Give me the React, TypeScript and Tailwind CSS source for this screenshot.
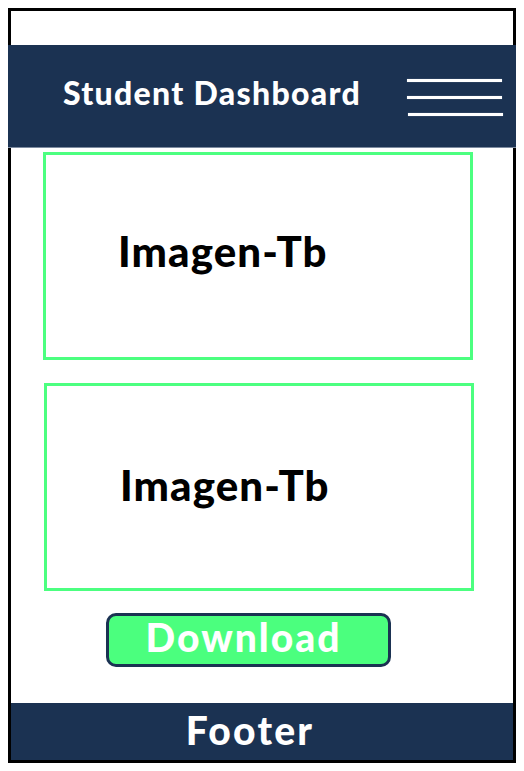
export default function App() {
  const font = { fontFamily: "Lato, 'Open Sans', sans-serif" };
  return (
    <div className="w-[524px] h-[771px] bg-white" style={font}>
      <div className="absolute left-[8px] top-[8px] w-[508px] h-[755px] border-[3px] border-black flex flex-col bg-white">
        <div className="mt-[34px] -mx-[3px] h-[103px] bg-[#1b3252] flex items-center border-b border-[#7d8ba0]">
          <div className="ml-[55px] pb-[6px] text-white font-black text-[32px] tracking-[1.3px] leading-none w-[300px]">
            Student Dashboard
          </div>
          <div className="ml-[44px] flex flex-col gap-[14px] pt-[2px]">
            <div className="w-[95px] h-[3px] bg-white shadow-[0_0_1px_#9fb0c8]" />
            <div className="w-[95px] h-[3px] bg-white shadow-[0_0_1px_#9fb0c8]" />
            <div className="w-[95px] h-[3px] bg-white shadow-[0_0_1px_#9fb0c8] ml-[1px]" />
          </div>
        </div>
        <div className="ml-[32px] mt-[4px] w-[430px] h-[208px] border-[3px] border-[#4cff80] flex items-center pl-[72px] pb-[10px]">
          <span className="text-black font-black text-[42px] tracking-[1.1px] leading-none">Imagen-Tb</span>
        </div>
        <div className="ml-[33px] mt-[23px] w-[430px] h-[208px] border-[3px] border-[#4cff80] flex items-center pl-[73px] pb-[4px]">
          <span className="text-black font-black text-[42px] tracking-[1.1px] leading-none">Imagen-Tb</span>
        </div>
        <div className="ml-[95px] mt-[22px] w-[285px] h-[54px] rounded-[10px] border-[3px] border-[#1b3252] bg-[#4bff7e] flex items-center justify-center pr-[10px] pb-[5px]">
          <span className="text-white font-black text-[39px] tracking-[2px] leading-none">Download</span>
        </div>
        <div className="mt-auto h-[57px] bg-[#1b3252] flex items-center justify-center pr-[24px] pb-[2px]">
          <span className="text-white font-black text-[39px] tracking-[2.2px] leading-none">Footer</span>
        </div>
      </div>
    </div>
  );
}
